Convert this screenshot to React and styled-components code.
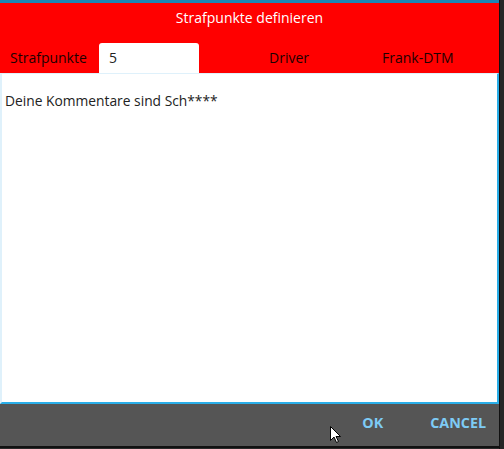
import React from "react";
import styled, { createGlobalStyle } from "styled-components";

const Global = createGlobalStyle`
  html, body { margin: 0; padding: 0; }
  body {
    background: #2b2b2b;
    width: 504px;
    height: 449px;
    overflow: hidden;
    font-family: "Open Sans", "Noto Sans", sans-serif;
  }
`;

const Screen = styled.div`
  position: relative;
  display: flex;
  width: 504px;
  height: 449px;
`;

const Dialog = styled.div`
  width: 499px;
  display: flex;
  flex-direction: column;
  border-top: 3px solid #1b86b5;
  height: 443px;
  border-bottom: 2px solid #111;
`;

const Header = styled.div`
  background: #ff0000;
  display: flex;
  flex-direction: column;
  height: 70px;
`;

const Title = styled.div`
  color: #fff;
  font-size: 14px;
  text-align: center;
  height: 30px;
  line-height: 30px;
`;

const FieldRow = styled.div`
  display: flex;
  align-items: flex-end;
  height: 40px;
  padding-left: 10px;
`;

const Label = styled.span`
  color: #1c0000;
  font-size: 14px;
  width: ${(p) => p.$w}px;
  height: 30px;
  line-height: 30px;
`;

const Input = styled.div`
  width: 100px;
  height: 30px;
  box-sizing: border-box;
  background: #fff;
  border-radius: 3px 3px 0 0;
  padding-left: 10px;
  line-height: 30px;
  font-size: 14px;
  color: #222;
  margin-right: 70px;
`;

const TextArea = styled.div`
  flex: 1;
  background: #fff;
  border-left: 2px solid #dff1fb;
  border-right: 2px solid #29aee8;
  border-bottom: 2px solid #29aee8;
  border-top: 1px solid #dff1fb;
  padding: 17px 3px;
  font-size: 13.8px;
  color: #222;
`;

const Footer = styled.div`
  background: #555555;
  height: 42px;
  display: flex;
  justify-content: flex-end;
  align-items: center;
  padding: 0 13px 6px 0;
  box-sizing: border-box;
`;

const Button = styled.span`
  color: #7ecbf5;
  font-weight: 700;
  font-size: 14.3px;
  margin-right: ${(p) => p.$gap}px;
`;

const Side = styled.div`
  flex: 1;
  background: #262626;
  border-left: 1px solid #111;
`;

const Cursor = styled.svg`
  position: absolute;
  left: 330px;
  top: 426px;
`;

export default function App() {
  return (
    <>
      <Global />
      <Screen>
        <Dialog>
          <Header>
            <Title>Strafpunkte definieren</Title>
            <FieldRow>
              <Label $w={89}>Strafpunkte</Label>
              <Input>5</Input>
              <Label $w={113}>Driver</Label>
              <Label $w={90}>Frank-DTM</Label>
            </FieldRow>
          </Header>
          <TextArea>Deine Kommentare sind Sch****</TextArea>
          <Footer>
            <Button $gap={47}>OK</Button>
            <Button $gap={0}>CANCEL</Button>
          </Footer>
        </Dialog>
        <Side />
        <Cursor width="12" height="18" viewBox="0 0 12 18">
          <path d="M0.5 0.5 L0.5 14.5 L4 11 L6.5 16.5 L8.5 15.5 L6 10.5 L10.5 10.5 Z" fill="#fff" stroke="#000" strokeWidth="1" />
        </Cursor>
      </Screen>
    </>
  );
}
